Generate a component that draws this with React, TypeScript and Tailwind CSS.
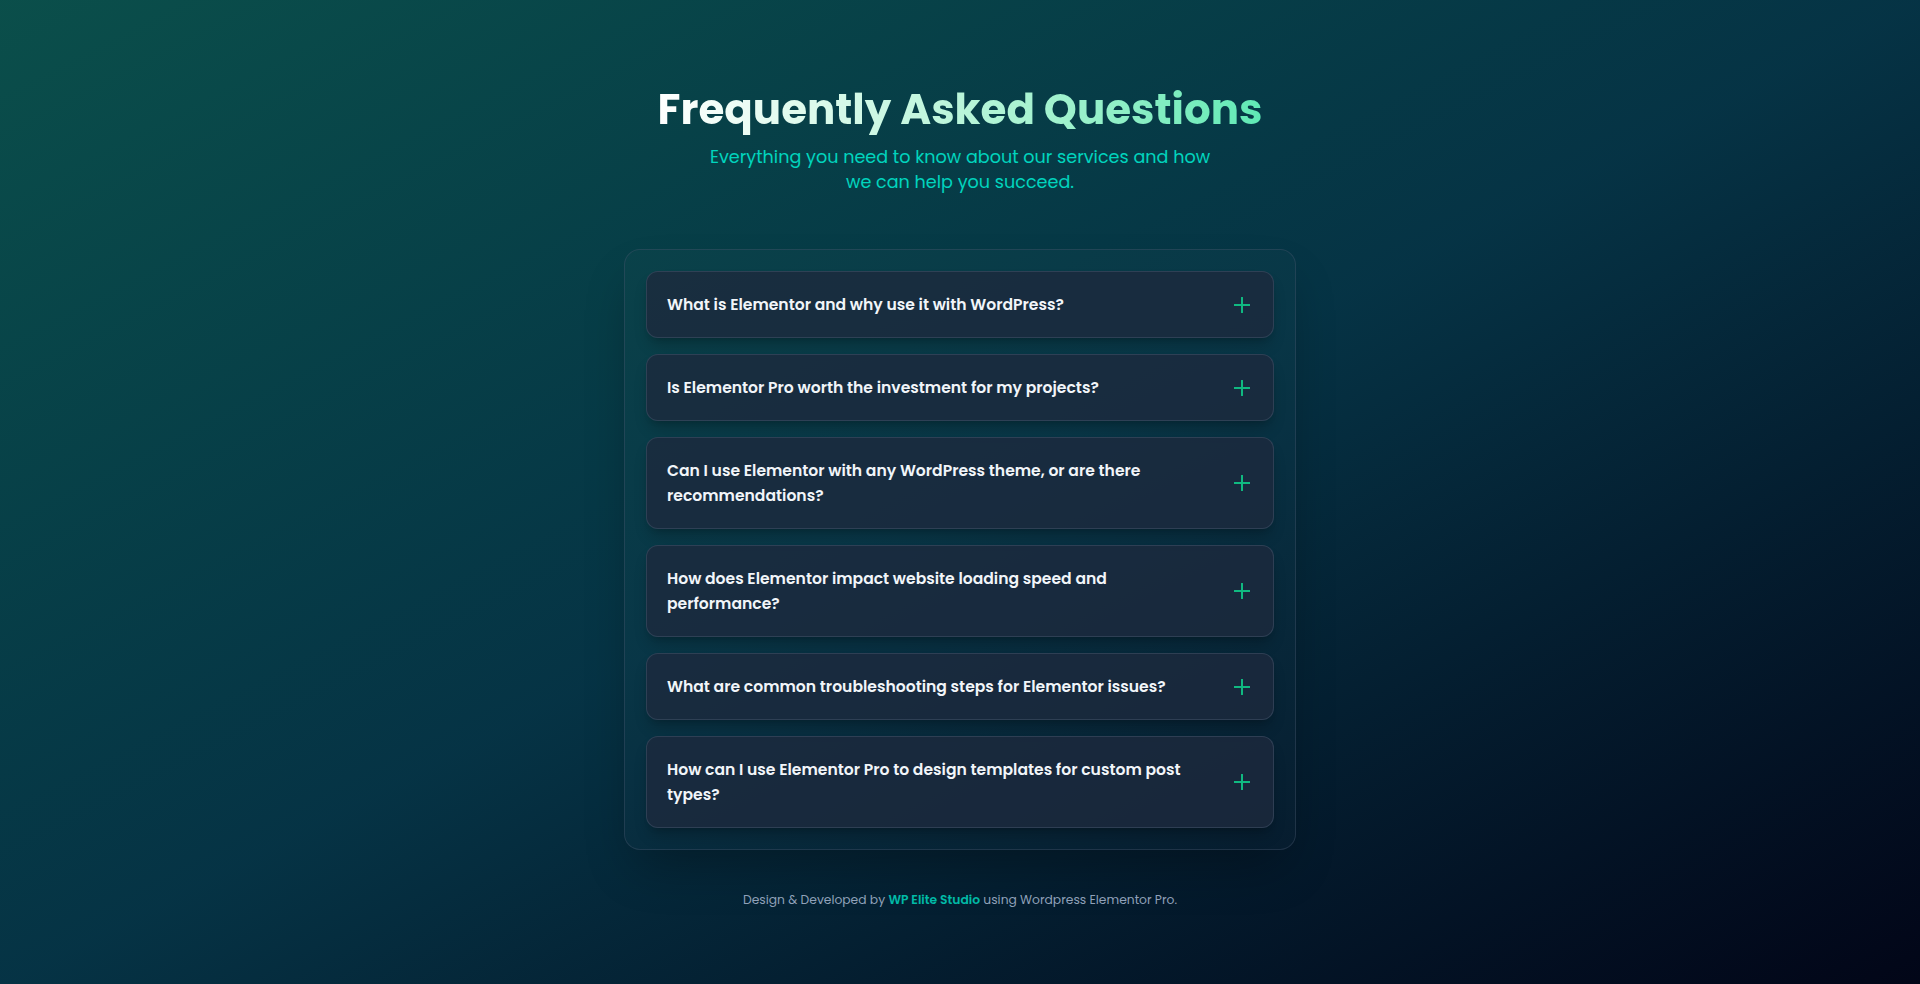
import React from "react";

const questions = [
  "What is Elementor and why use it with WordPress?",
  "Is Elementor Pro worth the investment for my projects?",
  "Can I use Elementor with any WordPress theme, or are there recommendations?",
  "How does Elementor impact website loading speed and performance?",
  "What are common troubleshooting steps for Elementor issues?",
  "How can I use Elementor Pro to design templates for custom post types?",
];

function PlusIcon() {
  return (
    <svg width="16" height="16" viewBox="0 0 16 16" fill="none" className="shrink-0">
      <path d="M8 0.5V15.5M0.5 8H15.5" stroke="#10b981" strokeWidth="2" strokeLinecap="round" />
    </svg>
  );
}

export default function App() {
  return (
    <div
      className="min-h-screen w-full bg-gradient-to-br from-teal-900 via-cyan-950 to-slate-950 flex flex-col items-center pt-[85px]"
      style={{ fontFamily: "Poppins, Inter, 'Noto Sans', sans-serif" }}
    >
      <h1 className="text-[42px] leading-[50px] font-bold bg-gradient-to-r from-white to-emerald-300 bg-clip-text text-transparent">
        Frequently Asked Questions
      </h1>
      <p className="mt-[10px] text-[17.6px] leading-[25px] text-teal-400 text-center">
        Everything you need to know about our services and how
        <br />
        we can help you succeed.
      </p>

      <div className="mt-[54px] w-[672px] rounded-2xl border border-slate-600/40 bg-white/[0.015] p-[21px] shadow-2xl shadow-black/30 flex flex-col gap-4">
        {questions.map((q) => (
          <div
            key={q}
            className="flex items-center gap-3 rounded-xl border border-slate-600/50 bg-slate-800/80 pl-5 pr-[23px] py-5 shadow-lg shadow-black/20"
          >
            <span className="flex-1 text-[15.6px] leading-[25px] font-semibold text-slate-100">{q}</span>
            <PlusIcon />
          </div>
        ))}
      </div>

      <p className="mt-10 text-[12.3px] leading-5 text-slate-400">
        Design &amp; Developed by{" "}
        <span className="font-semibold text-teal-500">WP Elite Studio</span> using Wordpress Elementor Pro.
      </p>
    </div>
  );
}
